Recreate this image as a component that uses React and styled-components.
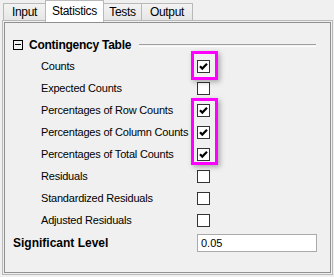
import React from "react";
import styled, { createGlobalStyle } from "styled-components";

const Global = createGlobalStyle`
  html, body { margin: 0; padding: 0; background: #f0f0f0; }
  body { font-family: "Liberation Sans", Arial, sans-serif; }
`;

const Page = styled.div`
  width: 334px;
  height: 277px;
  background: #f0f0f0;
  box-sizing: border-box;
  padding: 0 1px 0 2px;
  display: flex;
  flex-direction: column;
`;

const TabBar = styled.div`
  display: flex;
  align-items: flex-end;
  height: 21px;
  padding-left: 1px;
  position: relative;
  z-index: 1;
`;

const Tab = styled.div`
  box-sizing: border-box;
  width: ${(p) => p.$w}px;
  height: ${(p) => (p.$active ? "22px" : "18px")};
  margin-bottom: ${(p) => (p.$active ? "-1px" : "0")};
  padding-top: ${(p) => (p.$active ? "3px" : "1px")};
  text-align: center;
  border: 1px solid #b9b9b9;
  border-bottom: ${(p) => (p.$active ? "none" : "1px solid #b9b9b9")};
  border-left: ${(p) => (p.$first || p.$active ? "1px solid #b9b9b9" : "none")};
  border-right: ${(p) => (p.$beforeActive ? "none" : "1px solid #b9b9b9")};
  background: ${(p) => (p.$active ? "#ffffff" : "linear-gradient(#f3f3f3, #e6e6e6)")};
  font-size: 12px;
  letter-spacing: -0.3px;
  color: #000;
  line-height: 15px;
  white-space: nowrap;
`;

const Outer = styled.div`
  box-sizing: border-box;
  height: 255px;
  border: 1px solid #b9b9b9;
  padding: 1px;
  margin-top: -1px;
`;

const Inner = styled.div`
  position: relative;
  box-sizing: border-box;
  height: 100%;
  border: 1px solid #8f8f8f;
  padding: 12px 0 0 8px;
  font-size: 11px;
  color: #000;
`;

const Header = styled.div`
  display: flex;
  align-items: center;
  height: 20px;
`;

const MinusBox = styled.div`
  box-sizing: border-box;
  width: 10px;
  height: 10px;
  border: 1px solid #000;
  position: relative;
  margin-right: 6px;
  &::after {
    content: "";
    position: absolute;
    left: 1px;
    right: 1px;
    top: 3px;
    height: 1px;
    background: #000;
  }
`;

const HeaderTitle = styled.span`
  font-weight: bold;
  font-size: 12px;
  letter-spacing: -0.25px;
  white-space: nowrap;
`;

const Etched = styled.div`
  flex: 1;
  margin: 0 14px 0 8px;
  height: 1px;
  border-top: 1px solid #a0a0a0;
  border-bottom: 1px solid #ffffff;
`;

const Row = styled.div`
  display: flex;
  align-items: center;
  height: ${(p) => (p.$tall ? "24px" : "22px")};
`;

const Label = styled.span`
  width: ${(p) => (p.$bold ? "184px" : "156px")};
  padding-left: ${(p) => (p.$bold ? "0" : "28px")};
  font-weight: ${(p) => (p.$bold ? "bold" : "normal")};
  font-size: ${(p) => (p.$bold ? "12px" : "11px")};
  letter-spacing: ${(p) => (p.$bold ? "0" : "-0.2px")};
  white-space: nowrap;
`;

const Box = styled.div`
  box-sizing: border-box;
  width: 13px;
  height: 13px;
  border: 1px solid #333;
  background: #fff;
  display: flex;
  align-items: center;
  justify-content: center;
`;

const Input = styled.div`
  box-sizing: border-box;
  width: 120px;
  height: 18px;
  border: 1px solid #aaaaaa;
  background: #fff;
  padding: 0 3px;
  font-size: 11px;
  line-height: 16px;
`;

const Highlight = styled.div`
  position: absolute;
  box-sizing: border-box;
  border: 3px solid #ff00ff;
  box-shadow: 2px 2px 5px rgba(0, 0, 0, 0.3);
`;

const Check = () => (
  <svg width="9" height="9" viewBox="0 0 9 9">
    <path d="M1 4.2 L3.3 6.6 L8 1.8" fill="none" stroke="#000" strokeWidth="2.2" />
  </svg>
);

const Checkbox = ({ checked }) => <Box>{checked && <Check />}</Box>;

const rows = [
  ["Counts", true],
  ["Expected Counts", false],
  ["Percentages of Row Counts", true],
  ["Percentages of Column Counts", true],
  ["Percentages of Total Counts", true],
  ["Residuals", false],
  ["Standardized Residuals", false],
  ["Adjusted Residuals", false],
];

export default function App() {
  return (
    <>
      <Global />
      <Page>
        <TabBar>
          <Tab $first $beforeActive $w={42}>Input</Tab>
          <Tab $active $w={59}>Statistics</Tab>
          <Tab $w={38}>Tests</Tab>
          <Tab $w={51}>Output</Tab>
        </TabBar>
        <Outer>
          <Inner>
            <Header>
              <MinusBox />
              <HeaderTitle>Contingency Table</HeaderTitle>
              <Etched />
            </Header>
            {rows.map(([label, checked]) => (
              <Row key={label}>
                <Label>{label}</Label>
                <Checkbox checked={checked} />
              </Row>
            ))}
            <Row $tall>
              <Label $bold>Significant Level</Label>
              <Input>0.05</Input>
            </Row>
            <Highlight style={{ left: 186, top: 28, width: 27, height: 29 }} />
            <Highlight style={{ left: 186, top: 75, width: 27, height: 67 }} />
          </Inner>
        </Outer>
      </Page>
    </>
  );
}
